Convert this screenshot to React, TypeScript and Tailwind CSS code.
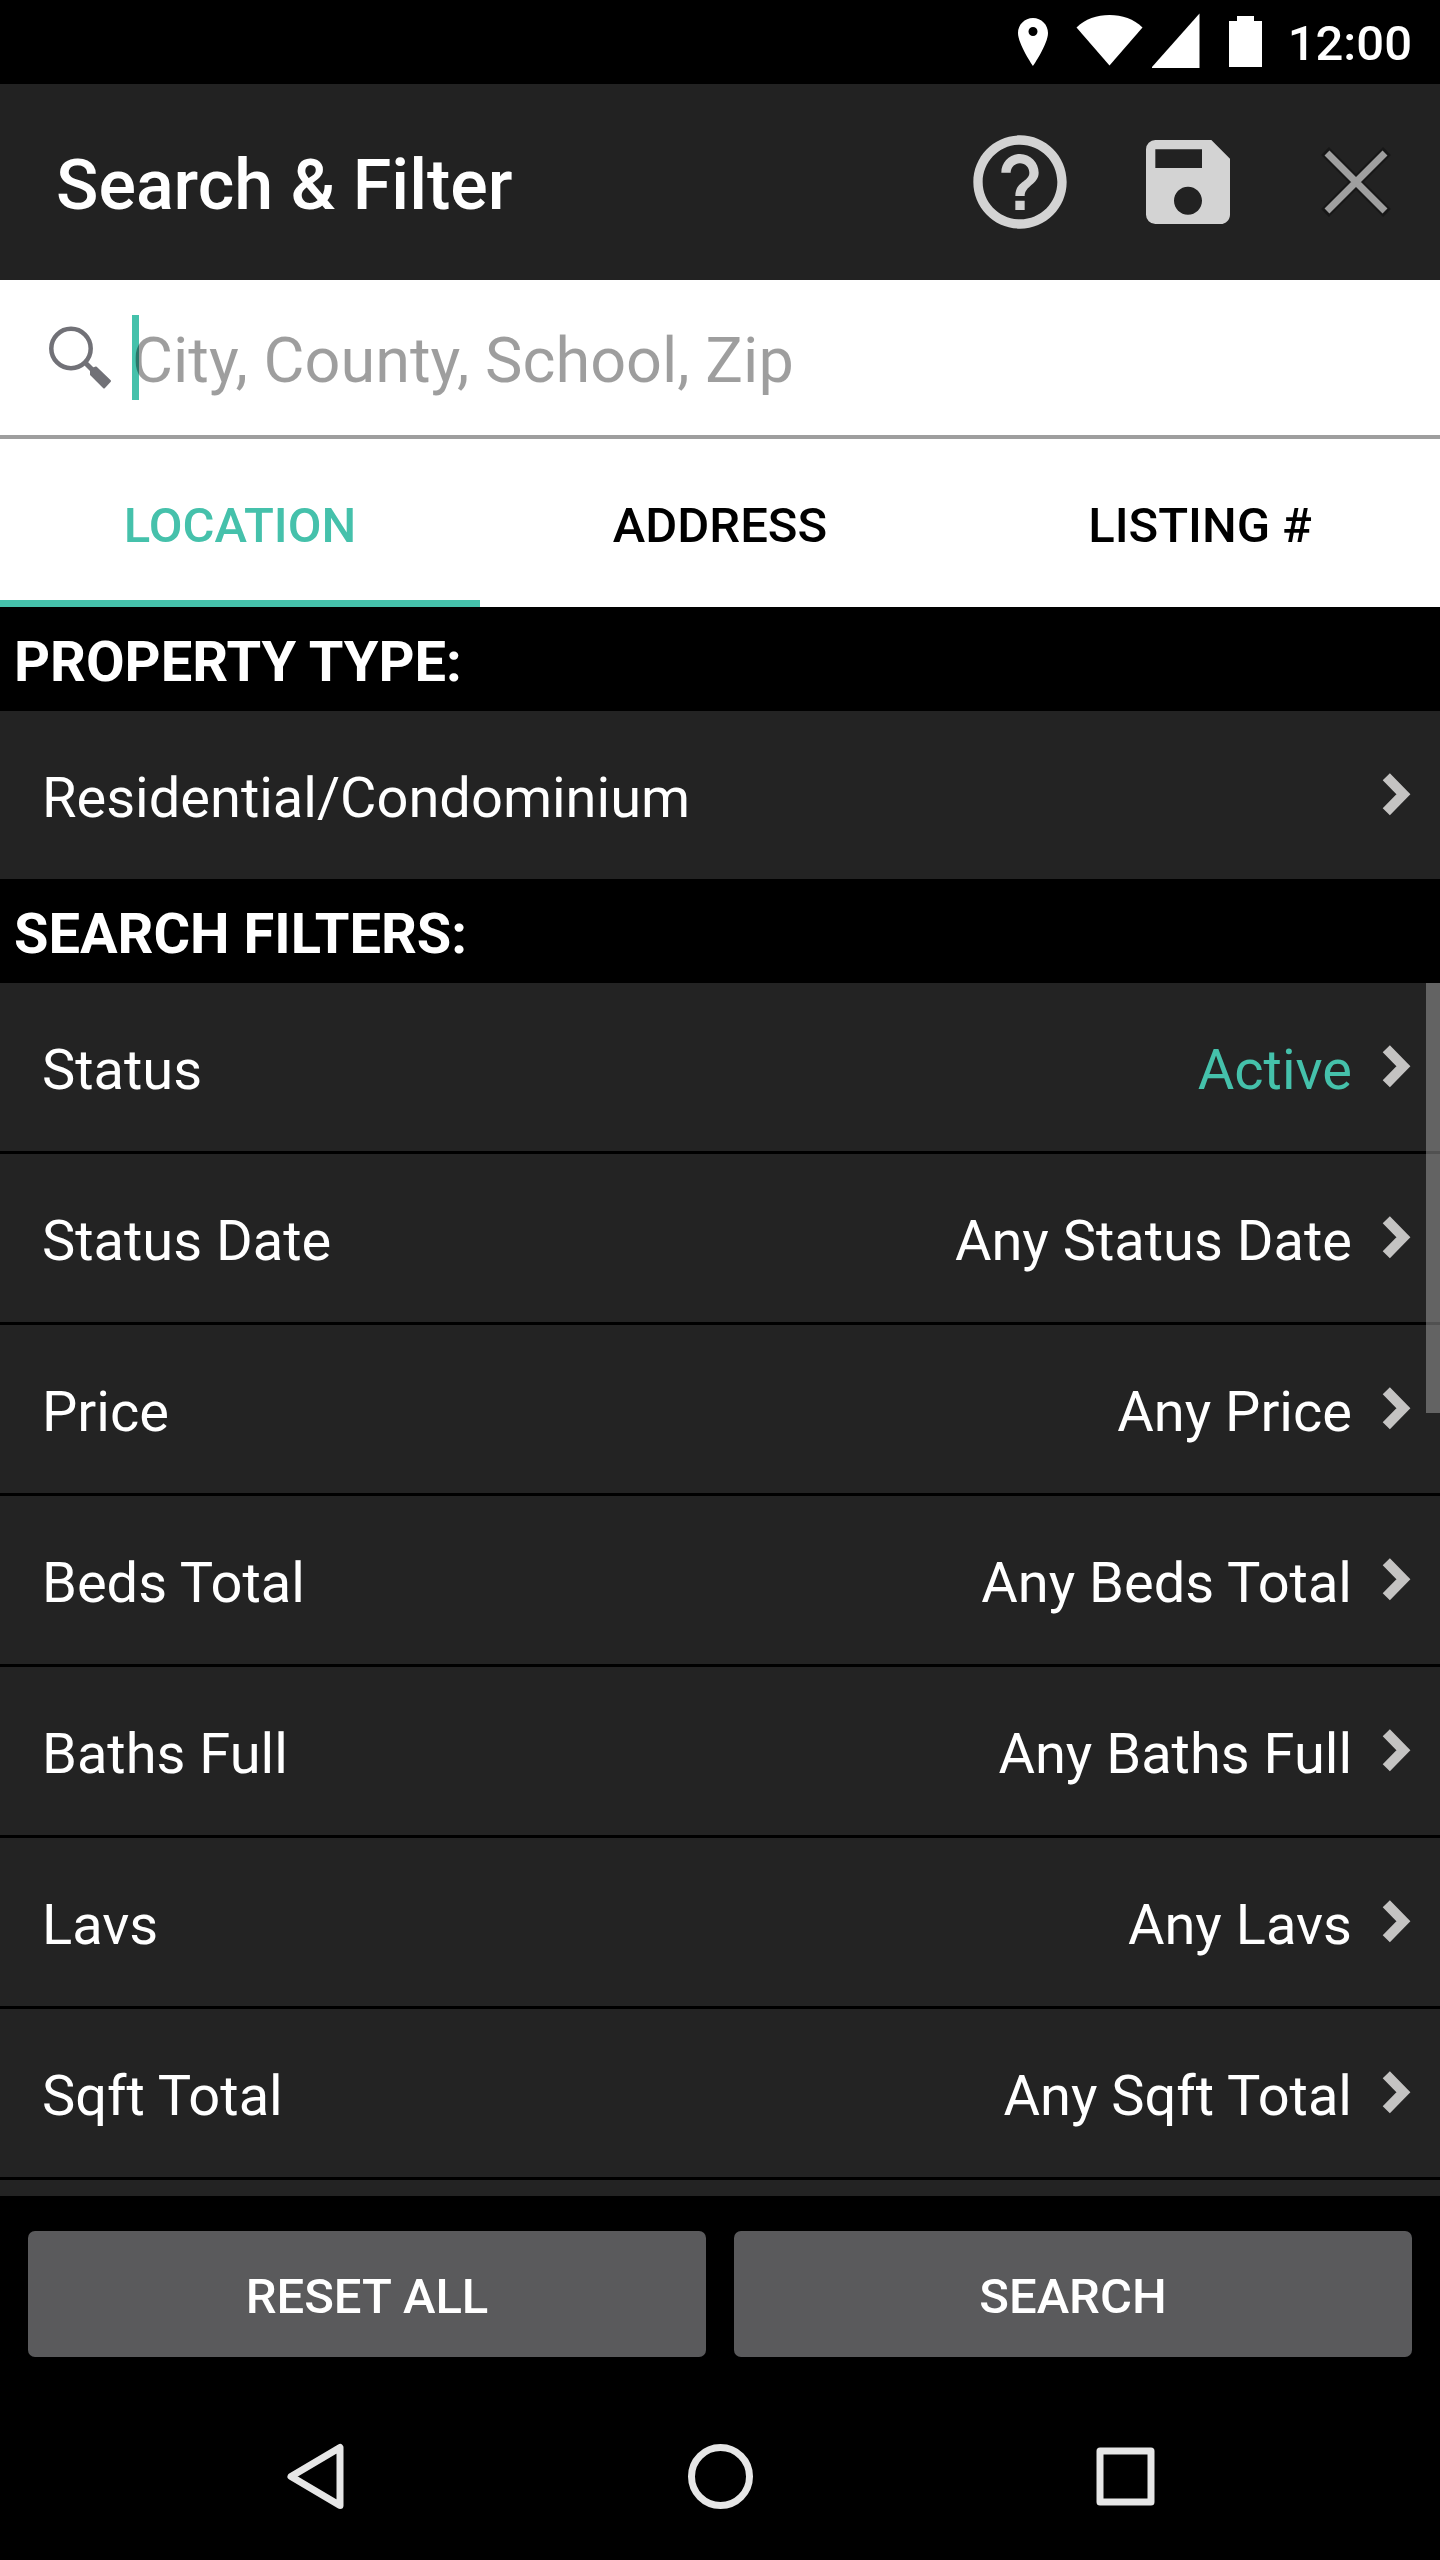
import { useState } from "react";
import { MdHelpOutline, MdSave } from "react-icons/md";

const tabs = ["Location", "Address", "Listing #"];

type Filter = { label: string; value: string; active?: boolean };

const filters: Filter[] = [
  { label: "Status", value: "Active", active: true },
  { label: "Status Date", value: "Any Status Date" },
  { label: "Price", value: "Any Price" },
  { label: "Beds Total", value: "Any Beds Total" },
  { label: "Baths Full", value: "Any Baths Full" },
  { label: "Lavs", value: "Any Lavs" },
  { label: "Sqft Total", value: "Any Sqft Total" },
];

function StatusBar() {
  return (
    <div className="flex h-[84px] items-center justify-end bg-black pr-7 text-white">
      <svg viewBox="-3 0 140 60" className="h-[60px] w-[140px]" fill="currentColor" aria-hidden="true">
        <path
          fillRule="evenodd"
          d="M18 6C9.700 6 3 12.700 3 21c0 11 15 33 15 33s15-22 15-33C33 12.700 26.300 6 18 6Zm0 9a4.500 4.500 0 1 1 0 9a4.500 4.500 0 0 1 0-9Z"
        />
        <path d="M61.500 15.500C70 7 82 3 94.500 3s24.500 4 33 12.500L94.500 53.500Z" />
      </svg>
      <svg viewBox="0 0 136 60" className="h-[60px] w-[136px]" fill="currentColor" aria-hidden="true">
        <path d="M47.500 1.500V56H-1Z" />
        <path d="M85 4h17v5h8v46H77V9h8Z" />
      </svg>
      <span className="pt-1 text-[49px] leading-[60px] font-medium">12:00</span>
    </div>
  );
}

function Chevron() {
  return (
    <svg viewBox="0 0 28 42" className="h-[42px] w-7 shrink-0 overflow-visible" fill="none" stroke="#c4c3c2" strokeWidth="10" aria-hidden="true">
      <path d="M2.300 2.800L19.400 20.300L2.300 37.800" />
    </svg>
  );
}

function Row({ label, value, active }: { label: string; value?: string; active?: boolean }) {
  return (
    <button className="flex h-[168px] w-full items-center bg-[#232323] pr-7 pl-[42px] text-left text-[56px] leading-[66px]">
      <span className="flex-1 pt-1.5">{label}</span>
      {value && <span className={active ? "pt-1.5 text-[#45c1ab]" : "pt-1.5"}>{value}</span>}
      <span className="pl-8">
        <Chevron />
      </span>
    </button>
  );
}

function SectionTitle({ children }: { children: string }) {
  return (
    <h2 className="px-3.5 pt-[22px] pb-4 text-[56px] leading-[66px] font-bold uppercase">{children}</h2>
  );
}

export default function App() {
  const [tab, setTab] = useState(tabs[0]);

  return (
    <div className="flex min-h-screen flex-col bg-black font-[Roboto,sans-serif] text-white">
      <StatusBar />

      <header className="flex h-[196px] items-center bg-[#222222] pl-14">
        <h1 className="flex-1 pt-1.5 text-[70px] leading-[82px] font-medium">Search &amp; Filter</h1>
        <button aria-label="Help" className="flex w-[168px] justify-center text-[#d3d3d3]">
          <MdHelpOutline className="size-28" />
        </button>
        <button aria-label="Save search" className="flex w-[168px] justify-center text-[#d3d3d3]">
          <MdSave className="size-28" />
        </button>
        <button aria-label="Close" className="flex w-[168px] justify-center">
          <svg viewBox="0 0 72 72" className="size-[72px]" fill="none" aria-hidden="true">
            <path d="M5 5L67 67M67 5L5 67" stroke="#171717" strokeWidth="11" />
            <path d="M7 7L65 65M65 7L7 65" stroke="#9f9f9f" strokeWidth="7" />
          </svg>
        </button>
      </header>

      <div className="flex h-[159px] items-center border-b-4 border-[#9e9e9e] bg-white pl-12">
        <label htmlFor="search" aria-label="Search">
          <svg viewBox="0 0 64 64" className="size-16" fill="none" stroke="#717177" aria-hidden="true">
            <circle cx="23" cy="22.500" r="19.700" strokeWidth="4.500" />
            <path d="M36.500 36L45 44.500" strokeWidth="5" />
            <path d="M43 43.500L48 41.500L62 55L56 61.500L43 48.500Z" fill="#717177" strokeWidth="2" strokeLinejoin="round" />
          </svg>
        </label>
        {/* Caret in front of the empty field */}
        <span className="ml-5 h-[85px] w-[7px] bg-[#45c1ab]" />
        <input
          id="search"
          type="text"
          placeholder="City, County, School, Zip"
          className="relative -ml-[7px] min-w-0 flex-1 bg-transparent pt-1.5 text-[63px] leading-[74px] text-black outline-none placeholder:text-black/38"
        />
      </div>

      <div role="tablist" className="grid grid-cols-3 bg-white">
        {tabs.map((t) => (
          <button
            key={t}
            role="tab"
            aria-selected={tab === t}
            onClick={() => setTab(t)}
            className={`h-[168px] border-b-[7px] pt-3 text-[49px] leading-[58px] font-medium uppercase ${
              tab === t ? "border-[#45c1ab] text-[#45c1ab]" : "border-transparent text-black"
            }`}
          >
            {t}
          </button>
        ))}
      </div>

      <SectionTitle>Property Type:</SectionTitle>
      <Row label="Residential/Condominium" />

      <SectionTitle>Search Filters:</SectionTitle>
      <div className="relative">
        <ul>
          {filters.map((f) => (
            <li key={f.label} className="border-b-[3px] border-black">
              <Row {...f} />
            </li>
          ))}
        </ul>
        {/* Top edge of the next row */}
        <div className="h-4 bg-[#232323]" />
        <div className="absolute top-0 right-0 h-[430px] w-3.5 bg-[#aaaaaa]/48" />
      </div>

      <div className="grid grid-cols-2 gap-7 px-7 py-[35px]">
        <button className="h-[126px] rounded-[7px] bg-[#5a5a5c] pt-1.5 text-[49px] leading-[58px] font-medium uppercase">
          Reset All
        </button>
        <button className="h-[126px] rounded-[7px] bg-[#5a5a5c] pt-1.5 text-[49px] leading-[58px] font-medium uppercase">
          Search
        </button>
      </div>

      <nav className="flex h-[168px] items-center justify-center gap-[308px] text-[#e6e6e6]">
        <button aria-label="Back">
          <svg viewBox="0 0 96 96" className="size-24" fill="none" stroke="currentColor" strokeWidth="7" strokeLinejoin="round" aria-hidden="true">
            <path d="M72 19.500V77.500L23 48.500Z" />
          </svg>
        </button>
        <button aria-label="Home">
          <svg viewBox="0 0 96 96" className="size-24" fill="none" stroke="currentColor" strokeWidth="7" aria-hidden="true">
            <circle cx="48.500" cy="48.500" r="29" />
          </svg>
        </button>
        <button aria-label="Recent apps">
          <svg viewBox="0 0 96 96" className="size-24" fill="none" stroke="currentColor" strokeWidth="7" strokeLinejoin="round" aria-hidden="true">
            <rect x="24" y="23" width="51" height="51" />
          </svg>
        </button>
      </nav>
    </div>
  );
}
